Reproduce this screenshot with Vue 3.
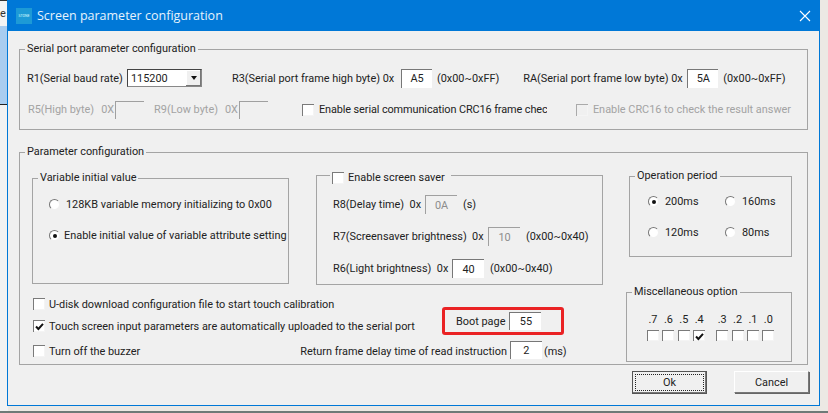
<script setup>
const periods = [
  { label: '200ms', on: true },
  { label: '160ms', on: false },
  { label: '120ms', on: false },
  { label: '80ms', on: false }
]
const highBits = [
  { label: '.7', on: false },
  { label: '.6', on: false },
  { label: '.5', on: false },
  { label: '.4', on: true }
]
const lowBits = ['.3', '.2', '.1', '.0']
</script>

<template>
  <div class="screen">
    <div class="backdrop">
      <span class="peek">e</span>
    </div>
    <div class="dialog">
      <div class="titlebar">
        <div class="logo">STONE</div>
        <div class="title">Screen parameter configuration</div>
        <svg class="close" width="12" height="12" viewBox="0 0 12 12">
          <path d="M1 1 L11 11 M11 1 L1 11" stroke="#fff" stroke-width="1.1" fill="none" />
        </svg>
      </div>

      <div class="body">
        <fieldset class="group serial">
          <legend>Serial port parameter configuration</legend>
          <div class="row row-serial">
            <span class="r1">R1(Serial baud rate)</span>
            <div class="combo">
              <span class="combo-value">115200</span>
              <span class="combo-btn"><i class="arrow"></i></span>
            </div>
            <span class="r3">R3(Serial port frame high byte) 0x</span>
            <span class="field w31">A5</span>
            <span class="hint">(0x00~0xFF)</span>
            <span class="ra">RA(Serial port frame low byte) 0x</span>
            <span class="field w31">5A</span>
            <span class="hint">(0x00~0xFF)</span>
          </div>
          <div class="row row-crc">
            <span class="muted">R5(High byte)</span>
            <span class="muted zero">0X</span>
            <span class="field w29 off"></span>
            <span class="muted r9">R9(Low byte)</span>
            <span class="muted zero">0X</span>
            <span class="field w29 off"></span>
            <span class="check crc-check"></span>
            <span class="crc-text">Enable serial communication CRC16 frame check</span>
            <span class="check off crc2-check"></span>
            <span class="muted">Enable CRC16 to check the result answer</span>
          </div>
        </fieldset>

        <fieldset class="group params">
          <legend>Parameter configuration</legend>
          <div class="top">
            <fieldset class="group variable">
              <legend>Variable initial value</legend>
              <div class="radio-row first">
                <span class="radio"></span>
                <span class="gap-text">128KB variable memory initializing to 0x00</span>
              </div>
              <div class="radio-row">
                <span class="radio on"></span>
                <span>Enable initial value of variable attribute setting</span>
              </div>
            </fieldset>

            <fieldset class="group saver">
              <legend class="saver-legend"><span class="check"></span><span>Enable screen saver</span></legend>
              <div class="row saver-row">
                <span class="l-r8">R8(Delay time)&nbsp; 0x</span>
                <span class="field w32 off">0A</span>
                <span class="unit">(s)</span>
              </div>
              <div class="row saver-row">
                <span class="l-r7">R7(Screensaver brightness)&nbsp; 0x</span>
                <span class="field w32 off">10</span>
                <span class="unit">(0x00~0x40)</span>
              </div>
              <div class="row saver-row">
                <span class="l-r6">R6(Light brightness)&nbsp; 0x</span>
                <span class="field w32">40</span>
                <span class="unit">(0x00~0x40)</span>
              </div>
            </fieldset>

            <fieldset class="group period">
              <legend>Operation period</legend>
              <div class="period-grid">
                <div v-for="p in periods" :key="p.label" class="radio-cell">
                  <span class="radio" :class="{ on: p.on }"></span>
                  <span>{{ p.label }}</span>
                </div>
              </div>
            </fieldset>
          </div>

          <div class="bottom">
            <div class="options">
              <div class="opt"><span class="check"></span><span>U-disk download configuration file to start touch calibration</span></div>
              <div class="opt second">
                <span class="check">
                  <svg width="11" height="11" viewBox="0 0 11 11"><path d="M2 5.5 L4.4 8 L9 2.8" stroke="#111" stroke-width="2" fill="none" /></svg>
                </span>
                <span>Touch screen input parameters are automatically uploaded to the serial port</span>
              </div>
              <div class="opt third">
                <span class="check"></span><span class="buzzer">Turn off the buzzer</span>
                <span class="delay-label">Return frame delay time of read instruction</span>
                <span class="field w32">2</span>
                <span class="unit-ms">(ms)</span>
              </div>
            </div>

            <div class="boot">
              <span>Boot page</span>
              <span class="field w32">55</span>
            </div>

            <fieldset class="group misc">
              <legend>Miscellaneous option</legend>
              <div class="bits">
                <div class="bit-set">
                  <div v-for="b in highBits" :key="b.label" class="bit">
                    <span>{{ b.label }}</span>
                    <span class="check small">
                      <svg v-if="b.on" width="11" height="11" viewBox="0 0 11 11"><path d="M2 5.5 L4.4 8 L9 2.8" stroke="#111" stroke-width="2" fill="none" /></svg>
                    </span>
                  </div>
                </div>
                <div class="bit-set">
                  <div v-for="b in lowBits" :key="b" class="bit">
                    <span>{{ b }}</span>
                    <span class="check small"></span>
                  </div>
                </div>
              </div>
            </fieldset>
          </div>
        </fieldset>

        <div class="footer">
          <button class="btn primary"><span class="focus">Ok</span></button>
          <button class="btn">Cancel</button>
        </div>
      </div>
    </div>
  </div>
</template>

<style>
html, body {
  margin: 0;
  background: #e9e7e3;
}
</style>

<style scoped>
.screen {
  position: relative;
  width: 828px;
  height: 413px;
  overflow: hidden;
  background: linear-gradient(#ece9e4 0, #ece9e4 411px, #6e7a78 411px);
  font-family: Roboto, "Noto Sans", sans-serif;
  font-size: 10.9px;
  color: #222;
}

.backdrop {
  position: absolute;
  left: 0;
  top: 0;
  width: 8px;
  height: 413px;
  background: linear-gradient(#333 0, #333 1px, #f4f4f4 1px, #f4f4f4 26px, #a9cdf0 26px, #a9cdf0 104px, #222 104px, #222 105px, #f2f2f2 105px, #f2f2f2 411px, #6e7a78 411px);
}

.peek {
  position: absolute;
  left: 0;
  top: 7px;
  font-size: 11px;
  color: #333;
}

.dialog {
  position: absolute;
  left: 7px;
  top: 0;
  width: 813px;
  height: 406px;
  box-sizing: border-box;
  border: 1px solid #0078d7;
  border-top: 0;
  background: #f0f0f0;
}

.titlebar {
  display: flex;
  align-items: center;
  height: 31px;
  background: #0078d7;
  color: #fff;
  padding-left: 8px;
}

.logo {
  width: 16px;
  height: 16px;
  background: #1d9ad6;
  color: #dff;
  font-size: 3.5px;
  line-height: 16px;
  text-align: center;
  overflow: hidden;
}

.title {
  flex: 1;
  margin-left: 5px;
  font-family: "Open Sans", "Noto Sans", sans-serif;
  font-size: 12.5px;
  color: #e6f3fc;
}

.close {
  margin-right: 8px;
}

.body {
  padding: 0 11px;
}

fieldset.group {
  margin: 0;
  padding: 0;
  min-width: 0;
  box-sizing: border-box;
  border: 1px solid #a4a4a4;
  border-radius: 0;
}

legend {
  padding: 0 2px;
  margin-left: 5px;
  line-height: 14px;
}

.serial {
  margin-top: 11px !important;
  height: 88px;
}

.row {
  display: flex;
  align-items: center;
  white-space: nowrap;
}

.row-serial {
  padding: 12px 0 0 7px;
  height: 20px;
  box-sizing: content-box;
}

.r1 {
  width: 100px;
}

.combo {
  display: flex;
  align-items: center;
  justify-content: space-between;
  width: 75px;
  height: 18px;
  box-sizing: border-box;
  border: 1px solid #888;
  border-left-color: #444;
  border-top-color: #444;
  background: #fff;
  padding-left: 3px;
}

.combo-btn {
  display: flex;
  align-items: center;
  justify-content: center;
  width: 15px;
  height: 16px;
  background: #f0f0f0;
  box-shadow: inset -1px -1px 0 #777, inset 1px 1px 0 #fff;
}

.arrow {
  width: 0;
  height: 0;
  border-left: 3.5px solid transparent;
  border-right: 3.5px solid transparent;
  border-top: 4px solid #111;
}

.r3 {
  width: 168px;
  margin-left: 30px;
}

.ra {
  width: 163px;
  margin-left: 24px;
}

.hint {
  margin-left: 5px;
}

.field {
  display: inline-flex;
  align-items: center;
  justify-content: center;
  flex: none;
  box-sizing: border-box;
  height: 19px;
  margin-left: 1px;
  background: #fff;
  border-top: 1px solid #777;
  border-left: 1px solid #777;
}

.field.off {
  background: #f0f0f0;
  color: #8c8c8c;
  border-color: #a0a0a0;
}

.w31 { width: 31px; }
.w32 { width: 32px; }
.w29 { width: 29px; height: 18px; margin-left: 1px; }

.row-crc {
  margin-top: 12px;
  padding-left: 8px;
  height: 19px;
}

.muted {
  color: #a3a3a3;
}

.zero {
  margin-left: 7px;
}

.r9 {
  margin-left: 10px;
}

.check {
  display: inline-flex;
  align-items: center;
  justify-content: center;
  flex: none;
  width: 12px;
  height: 12px;
  box-sizing: border-box;
  background: #fff;
  border-top: 1px solid #7a7a7a;
  border-left: 1px solid #7a7a7a;
  box-shadow: inset -1px -1px 0 #f4f4f4;
}

.check.off {
  background: #f0f0f0;
  border-color: #aaa;
}

.crc-check {
  margin-left: 34px;
}

.crc-text {
  width: 228px;
  margin-left: 5px;
  overflow: hidden;
  letter-spacing: -0.1px;
}

.crc2-check {
  margin-left: 29px;
  margin-right: 5px;
}

.params {
  margin-top: 15px !important;
  height: 220px;
}

.top {
  display: flex;
  align-items: flex-start;
  padding: 12px 0 0 12px;
}

.variable {
  width: 257px;
  height: 113px;
}

.radio-row {
  display: flex;
  align-items: center;
  white-space: nowrap;
  height: 15px;
  padding-left: 16px;
  gap: 4px;
  margin-top: 16px;
}

.radio-row.first {
  margin-top: 12px;
}

.gap-text {
  margin-left: 2px;
}

.radio {
  position: relative;
  flex: none;
  width: 11px;
  height: 11px;
  box-sizing: border-box;
  border-radius: 50%;
  background: #fff;
  border: 1px solid;
  border-color: #777 #f0f0f0 #f0f0f0 #777;
}

.radio.on::after {
  content: "";
  position: absolute;
  left: 2.5px;
  top: 2.5px;
  width: 4px;
  height: 4px;
  border-radius: 50%;
  background: #111;
}

.saver {
  width: 287px;
  height: 120px;
  margin-left: 27px !important;
  margin-top: -6px !important;
}

.saver-legend {
  display: flex;
  align-items: center;
  gap: 4px;
  margin-left: 13px;
  padding-top: 6px;
  padding-right: 6px;
}

.saver-row {
  height: 19px;
  padding-left: 16px;
  margin-top: 13px;
}

.saver-legend + .saver-row {
  margin-top: 10px;
}

.l-r8 { width: 91px; }
.l-r7 { width: 154px; }
.l-r6 { width: 118px; }

.unit {
  margin-left: 6px;
}

.period {
  width: 163px;
  height: 88px;
  margin-left: 26px !important;
  margin-top: -2px !important;
}

.period-grid {
  display: grid;
  grid-template-columns: 77px 1fr;
  row-gap: 16px;
  padding: 11px 0 0 18px;
}

.radio-cell {
  display: flex;
  align-items: center;
  gap: 6px;
  height: 15px;
}

.bottom {
  display: flex;
  padding-left: 13px;
}

.options {
  width: 409px;
  padding-top: 11px;
  white-space: nowrap;
}

.opt {
  display: flex;
  align-items: center;
  gap: 4px;
  height: 16px;
}

.opt.second {
  margin-top: 6px;
}

.opt.third {
  margin-top: 9px;
}

.delay-label {
  margin-left: 156px;
}

.delay-label + .field {
  margin-left: -1px;
  height: 18px;
  margin-top: -2px;
}

.unit-ms {
  margin-left: -2px;
}

.boot {
  display: flex;
  align-items: center;
  gap: 4px;
  flex: none;
  box-sizing: border-box;
  width: 122px;
  height: 28px;
  margin-top: 22px;
  padding-left: 11px;
  border: 3px solid #ea2224;
  border-radius: 3px;
}

.boot .field {
  height: 18px;
  margin-left: 0;
}

.misc {
  flex: none;
  width: 166px;
  height: 77px;
  margin: 0 0 0 62px !important;
}

.bits {
  display: flex;
  gap: 11px;
  padding: 14px 0 0 20px;
}

.bit-set {
  display: flex;
  gap: 3.4px;
}

.bit {
  display: flex;
  flex-direction: column;
  align-items: center;
  width: 12px;
  line-height: 14px;
}

.check.small {
  height: 11px;
  margin-top: 3px;
}

.footer {
  display: flex;
  justify-content: flex-end;
  gap: 27px;
  margin-top: 6px;
  margin-right: -1px;
}

.btn {
  width: 75px;
  height: 22px;
  padding: 0;
  font: inherit;
  color: #222;
  background: #f0f0f0;
  border: 1px solid;
  border-color: #fff #777 #777 #fff;
  box-shadow: 1px 1px 0 #666;
}

.btn.primary {
  height: 23px;
  border: 1px solid #555;
  box-shadow: inset -1px -1px 0 #777;
  padding: 2px;
}

.focus {
  display: block;
  height: 100%;
  line-height: 15px;
  border: 1px dotted #222;
  box-sizing: border-box;
}
</style>
